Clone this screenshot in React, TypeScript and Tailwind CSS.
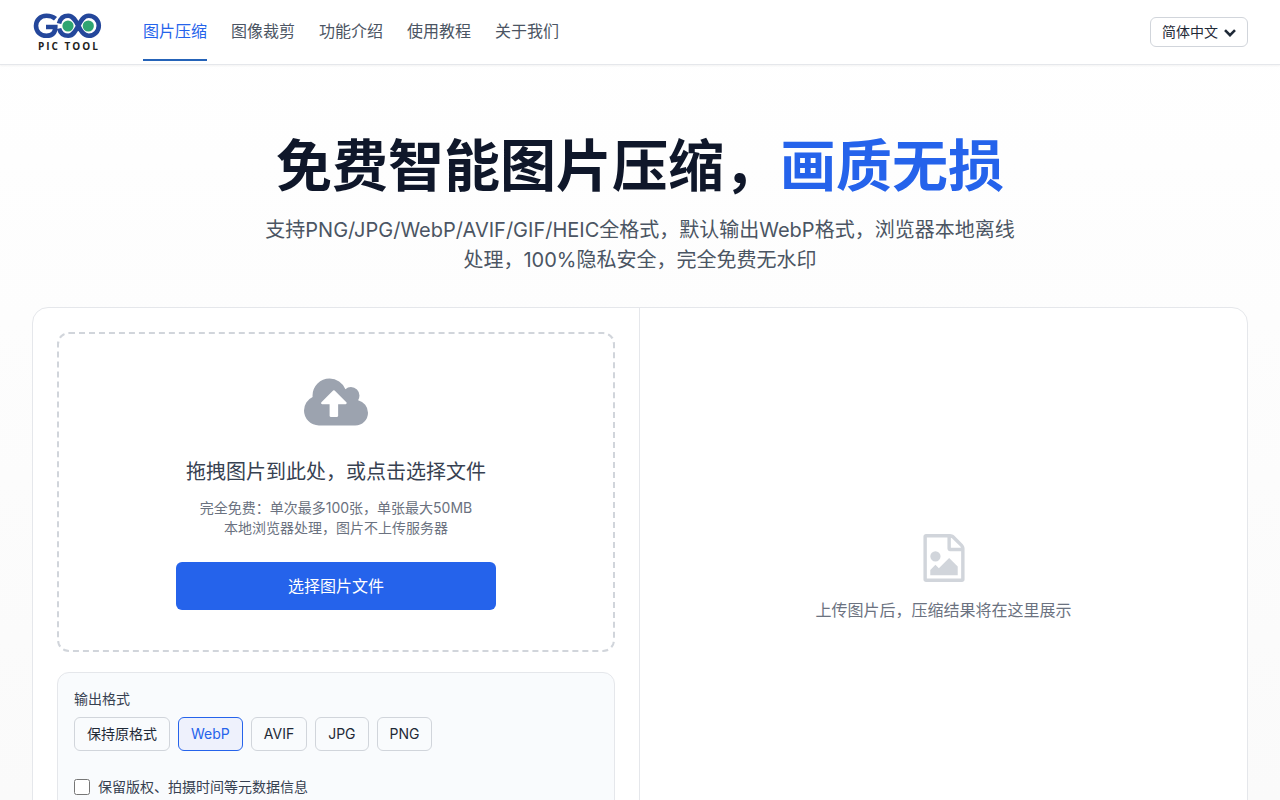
import React, { useState } from 'react';

const NAV_LINKS = ['图片压缩', '图像裁剪', '功能介绍', '使用教程', '关于我们'];
const LANGUAGES = ['简体中文', 'English'];
const FORMATS = ['保持原格式', 'WebP', 'AVIF', 'JPG', 'PNG'];

const Logo: React.FC = () => (
  <svg className="w-[71px] h-10" viewBox="0 0 71 40" role="img" aria-label="GOO PIC TOOL">
    <g fill="none" stroke="#24479b" strokeWidth="4.6">
      <path d="M23.5 6.8C21 4.6 18.5 3.8 14.5 3.8C8 3.8 4 8.4 4 13.8s4 10 10.5 10c5.5 0 8.8-2.6 8.8-8.8H14" />
      <path d="M27 11.5C28.3 6.5 31.5 3.8 36.2 3.8C46.2 3.8 46.2 23.8 56.8 23.8a10 10 0 0 0 0-20C46.2 3.8 46.2 23.8 36.2 23.8C31.5 23.8 28.3 21.2 27 16.5" />
    </g>
    <circle cx="36" cy="14" r="5.6" fill="#2fa572" />
    <circle cx="56.3" cy="14" r="5.6" fill="#2fa572" />
    <text x="6" y="38" fill="#222" fontFamily="'Open Sans', sans-serif" fontWeight="700" fontSize="10" letterSpacing="2">
      PIC TOOL
    </text>
  </svg>
);

const Header: React.FC = () => (
  <header className="bg-white border-b border-gray-200 shadow-[0_1px_2px_rgba(0,0,0,0.05)]">
    <div className="h-16 px-8 flex items-center justify-between">
      <div className="flex items-center gap-10 h-full">
        <a href="#home" className="block">
          <Logo />
        </a>
        <nav className="flex gap-6 h-full pb-[3px]">
          {NAV_LINKS.map((label, index) => (
            <a
              key={label}
              href={`#nav-${index}`}
              className={
                index === 0
                  ? 'flex items-center pt-0.5 border-b-2 border-[#2563b8] text-[#2563eb]'
                  : 'flex items-center pt-0.5 border-b-2 border-transparent text-[#4b5563] hover:text-[#2563eb]'
              }
            >
              {label}
            </a>
          ))}
        </nav>
      </div>
      <div className="relative">
        <select
          aria-label="语言"
          className="appearance-none block h-[30px] pl-[11px] pr-[29px] rounded-md border border-[#d1d5db] bg-white text-sm leading-5 text-[#1f2937]"
        >
          {LANGUAGES.map((language) => (
            <option key={language}>{language}</option>
          ))}
        </select>
        <svg
          className="absolute right-3 top-3 w-3 h-2 pointer-events-none"
          viewBox="0 0 12 8"
          fill="none"
          stroke="#1f2937"
          strokeWidth="2.6"
          aria-hidden="true"
        >
          <path d="M1 1.2l5 5 5-5" />
        </svg>
      </div>
    </div>
  </header>
);

const Hero: React.FC = () => (
  <section className="pt-[66px] pb-8 px-8 text-center">
    <h1 className="text-[56px] leading-[70px] font-bold text-[#0f172a] mb-[14px]">
      免费智能图片压缩，<span className="text-[#2563eb]">画质无损</span>
    </h1>
    <p className="max-w-3xl mx-auto text-xl leading-[30px] text-[#4b5563]">
      支持PNG/JPG/WebP/AVIF/GIF/HEIC全格式，默认输出WebP格式，浏览器本地离线处理，100%隐私安全，完全免费无水印
    </p>
  </section>
);

const CloudUploadIcon: React.FC = () => (
  <svg className="w-16 h-12 text-[#9ca3af]" viewBox="-64 128 1920 1408" fill="currentColor" aria-hidden="true">
    <path d="M1216 864q0-14-9-23l-352-352q-9-9-23-9t-23 9l-351 351q-10 12-10 24 0 14 9 23t23 9h224v352q0 13 9.5 22.5t22.5 9.5h192q13 0 22.5-9.5t9.5-22.5v-352h224q13 0 22.5-9.5t9.5-22.5zm640 288q0 159-112.5 271.5t-271.5 112.5h-1088q-185 0-316.5-131.5t-131.5-316.5q0-130 70-240t188-165q-2-30-2-43 0-212 150-362t362-150q156 0 285.5 87t188.5 231q71-62 166-62 106 0 181 75t75 181q0 76-41 138 130 31 213.5 135.5t83.5 238.5z" />
  </svg>
);

const FileImageIcon: React.FC = () => (
  <svg className="w-12 h-12 text-[#d1d5db]" viewBox="0 0 1792 1792" fill="currentColor" aria-hidden="true">
    <path d="M1596 380q28 28 48 76t20 88v1152q0 40-28 68t-68 28h-1344q-40 0-68-28t-28-68v-1600q0-40 28-68t68-28h896q40 0 88 20t76 48zm-444-244v376h376q-10-29-22-41l-313-313q-12-12-41-22zm384 1528v-1024h-416q-40 0-68-28t-28-68v-416h-768v1536h1280zm-128-448v320h-1024v-192l192-192 128 128 384-384zm-832-192q-80 0-136-56t-56-136 56-136 136-56 136 56 56 136-56 136-136 56z" />
  </svg>
);

const DropZone: React.FC = () => (
  <div className="h-80 flex flex-col items-center rounded-xl border-2 border-dashed border-[#d1d5db] pt-11 px-6">
    <CloudUploadIcon />
    <p className="mt-8 text-xl leading-7 text-[#374151]">拖拽图片到此处，或点击选择文件</p>
    <p className="mt-3 text-sm leading-5 text-center text-[#6b7280]">
      完全免费：单次最多100张，单张最大50MB
      <br />
      本地浏览器处理，图片不上传服务器
    </p>
    <button type="button" className="mt-6 w-80 max-w-full h-12 rounded-md bg-[#2563eb] hover:bg-[#1d4ed8] text-white">
      选择图片文件
    </button>
  </div>
);

const Settings: React.FC = () => {
  const [format, setFormat] = useState('WebP');
  const [keepMeta, setKeepMeta] = useState(false);

  return (
    <div className="mt-5 p-4 rounded-xl border border-[#e5e7eb] bg-[#f9fbfd]">
      <p id="format-label" className="text-sm text-[#374151] mb-2">输出格式</p>
      <div className="flex flex-wrap gap-2" role="group" aria-labelledby="format-label">
        {FORMATS.map((item) => (
          <button
            key={item}
            type="button"
            aria-pressed={item === format}
            onClick={() => setFormat(item)}
            className={
              item === format
                ? 'h-[34px] px-3 rounded-md border border-[#2563eb] bg-[#eef1fc] text-sm text-[#2563eb]'
                : 'h-[34px] px-3 rounded-md border border-[#d1d5db] bg-[#f9fbfd] text-sm text-[#1f2937]'
            }
          >
            {item}
          </button>
        ))}
      </div>
      <label className="mt-[26px] flex items-center gap-2 text-sm text-[#374151]">
        <input
          type="checkbox"
          className="w-4 h-4"
          checked={keepMeta}
          onChange={(event) => setKeepMeta(event.target.checked)}
        />
        保留版权、拍摄时间等元数据信息
      </label>
    </div>
  );
};

const App: React.FC = () => {
  return (
    <div className="h-screen overflow-hidden bg-linear-to-b from-white to-[#fafafa] font-['Inter','Noto_Sans_CJK_SC',sans-serif]">
      <Header />
      <Hero />
      <main className="px-8">
        <div className="grid grid-cols-2 min-h-[542px] rounded-2xl border border-[#e5e7eb] bg-white">
          <section className="p-6 border-r border-[#e5e7eb]">
            <DropZone />
            <Settings />
          </section>
          <section className="p-6 flex flex-col items-center justify-center text-[#6b7280]">
            <FileImageIcon />
            <p className="mt-4">上传图片后，压缩结果将在这里展示</p>
          </section>
        </div>
      </main>
    </div>
  );
};

export default App;
